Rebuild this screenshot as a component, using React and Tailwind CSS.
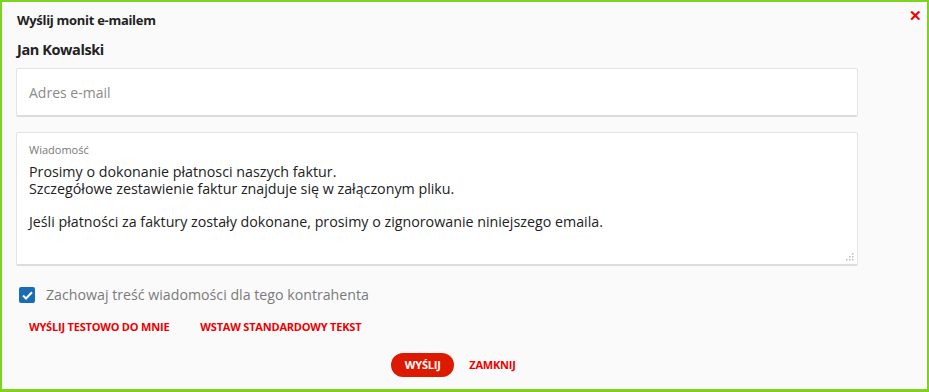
import React, { useState } from "react";

export default function App() {
  const [keep, setKeep] = useState(true);

  return (
    <div
      className="relative w-[929px] h-[392px] bg-[#fafafa] border-2 border-b-[3px] border-[#7ed321] px-[14px] text-[#222]"
      style={{ fontFamily: '"Open Sans", "Noto Sans", sans-serif' }}
    >
      {/* close */}
      <button className="absolute top-[6px] right-[5px] text-[#e00] text-[15px] leading-none font-bold">
        ✕
      </button>

      {/* header */}
      <h1 className="pt-[10px] ml-[1px] text-[13px] font-bold leading-[16px] tracking-[-0.3px]">
        Wyślij monit e-mailem
      </h1>
      <h2 className="mt-[13px] ml-[1px] text-[14.5px] font-bold leading-[18px] tracking-[-0.4px]">
        Jan Kowalski
      </h2>

      {/* email */}
      <div className="mt-[9px] w-[842px] h-[49px] bg-white border border-[#e4e4e4] border-b-2 border-b-[#dcdcdc] rounded-[2px] flex items-center px-[12px]">
        <span className="text-[14px] text-[#8a8a8a]">Adres e-mail</span>
      </div>

      {/* message */}
      <div className="relative mt-[15px] w-[842px] h-[134px] bg-white border border-[#e4e4e4] border-b-2 border-b-[#dcdcdc] rounded-[2px] px-[12px] pt-[10px]">
        <div className="text-[11px] text-[#777] leading-[14px]">Wiadomość</div>
        <div className="text-[14.25px] text-[#222] leading-[17px] mt-[6px]">
          <p>Prosimy o dokonanie płatnosci naszych faktur.</p>
          <p>Szczegółowe zestawienie faktur znajduje się w załączonym pliku.</p>
          <p className="mt-[16px]">
            Jeśli płatności za faktury zostały dokonane, prosimy o zignorowanie niniejszego emaila.
          </p>
        </div>
        <svg className="absolute right-[3px] bottom-[3px]" width="8" height="8" viewBox="0 0 8 8">
          <rect x="6" y="0" width="1.5" height="1.5" fill="#bbb" />
          <rect x="3" y="3" width="1.5" height="1.5" fill="#bbb" />
          <rect x="6" y="3" width="1.5" height="1.5" fill="#bbb" />
          <rect x="0" y="6" width="1.5" height="1.5" fill="#bbb" />
          <rect x="3" y="6" width="1.5" height="1.5" fill="#bbb" />
          <rect x="6" y="6" width="1.5" height="1.5" fill="#bbb" />
        </svg>
      </div>

      {/* keep checkbox */}
      <label className="mt-[20px] ml-[3px] flex items-center gap-[11px] cursor-pointer">
        <span
          onClick={() => setKeep(!keep)}
          className={
            "w-[16px] h-[16px] rounded-[2px] flex items-center justify-center " +
            (keep ? "bg-[#1a6db5]" : "bg-white border border-[#999]")
          }
        >
          {keep && (
            <svg width="11" height="9" viewBox="0 0 11 9" fill="none">
              <path d="M1 4.5 L4 7.5 L10 1.2" stroke="white" strokeWidth="2" />
            </svg>
          )}
        </span>
        <span className="text-[14.2px] text-[#7a7a7a] leading-[18px]">
          Zachowaj treść wiadomości dla tego kontrahenta
        </span>
      </label>

      {/* links */}
      <div className="mt-[16px] ml-[13px] flex gap-[31px] text-[11px] font-bold text-[#e00] tracking-[-0.2px] leading-[14px]">
        <button>WYŚLIJ TESTOWO DO MNIE</button>
        <button>WSTAW STANDARDOWY TEKST</button>
      </div>

      {/* actions */}
      <div className="mt-[19px] flex justify-center items-center gap-[15px] pr-[22px] text-[11px] font-bold tracking-[-0.2px]">
        <button className="w-[63px] h-[24px] rounded-full bg-[#dd1a00] text-white">WYŚLIJ</button>
        <button className="text-[#e00]">ZAMKNIJ</button>
      </div>
    </div>
  );
}
